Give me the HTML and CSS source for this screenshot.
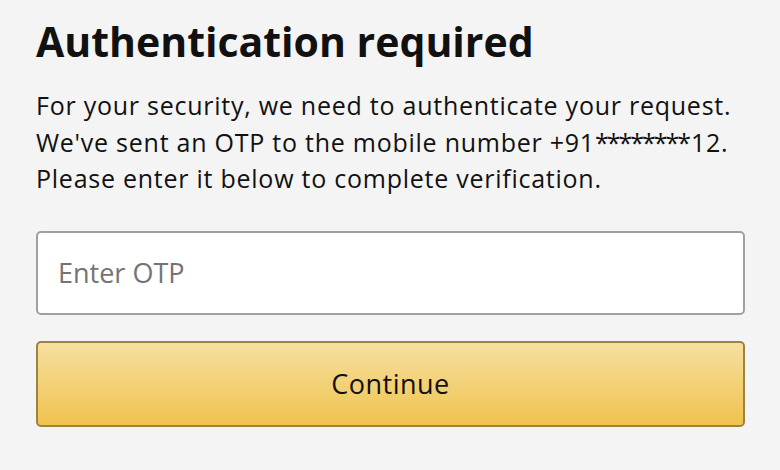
FILE: index.html
```html
<!DOCTYPE html>
<html>
<head>
<meta charset="utf-8">
<link rel="stylesheet" href="styles.css">
</head>
<body>
<main class="page">
  <h1 class="title">Authentication required</h1>
  <p class="desc">For your security, we need to authenticate your request.<br>We've sent an OTP to the mobile number +91<span class="mask">********</span>12.<br>Please enter it below to complete verification.</p>
  <div class="field"><span class="placeholder">Enter OTP</span></div>
  <div class="btn">Continue</div>
</main>
</body>
</html>
```
FILE: styles.css
```css
html, body {
  margin: 0;
  padding: 0;
  background: #f4f4f4;
  width: 780px;
  height: 470px;
  overflow: hidden;
}
.page {
  padding: 11px 35px 0 36px;
  font-family: "Open Sans", "Noto Sans", sans-serif;
  color: #111;
  display: flex;
  flex-direction: column;
}
.title {
  margin: 0;
  font-family: "Open Sans", sans-serif;
  font-weight: 700;
  font-size: 41px;
  letter-spacing: 0;
  line-height: 60px;
  color: #111;
}
.desc {
  margin: 16px 0 0 0;
  font-size: 25px;
  letter-spacing: 0.75px;
  line-height: 36.5px;
  color: #111;
}
.mask {
  letter-spacing: -2px;
  margin-right: 2px;
}
.field {
  box-sizing: border-box;
  margin-top: 34px;
  height: 84px;
  background: #fff;
  border: 2px solid #a0a0a0;
  border-radius: 5px;
  display: flex;
  align-items: center;
  padding-left: 20px;
}
.placeholder {
  font-size: 27px;
  color: #747474;
}
.btn {
  box-sizing: border-box;
  margin-top: 26px;
  height: 86px;
  border: 2px solid #9c8440;
  border-radius: 5px;
  background: linear-gradient(to bottom, #f6dfa0, #f0c34e);
  display: flex;
  align-items: center;
  justify-content: center;
  font-size: 27px;
  letter-spacing: 0.5px;
  color: #111;
}
```
